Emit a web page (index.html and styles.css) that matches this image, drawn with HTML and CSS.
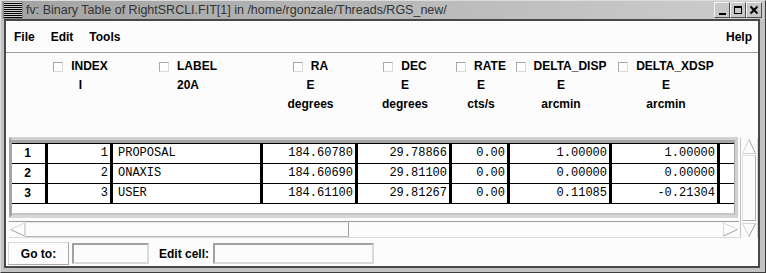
FILE: index.html
```html
<!DOCTYPE html>
<html>
<head>
<meta charset="utf-8">
<link rel="stylesheet" href="styles.css">
</head>
<body>
<div class="window">
  <div class="titlebar">
    <div class="ticon"></div>
    <div class="ttext">fv: Binary Table of RightSRCLI.FIT[1] in /home/rgonzale/Threads/RGS_new/</div>
    <div class="tbtns">
      <div class="tbtn"><svg width="14" height="14" viewBox="0 0 14 14"><rect x="4" y="10" width="7" height="2" fill="#000"/></svg></div>
      <div class="tbtn"><svg width="14" height="14" viewBox="0 0 14 14"><rect x="3.5" y="3.5" width="7" height="7" fill="none" stroke="#000"/><rect x="3" y="3" width="8" height="2" fill="#000"/></svg></div>
      <div class="tbtn"><svg width="14" height="14" viewBox="0 0 14 14"><path d="M3.5 3.5 L10.5 10.5 M10.5 3.5 L3.5 10.5" stroke="#000" stroke-width="2"/></svg></div>
    </div>
  </div>
  <div class="client">
    <div class="menubar">
      <span class="mi">File</span>
      <span class="mi">Edit</span>
      <span class="mi">Tools</span>
      <span class="mi help">Help</span>
    </div>
    <div class="header">
      <div></div>
      <div class="hcol"><div class="hname"><span class="cb"></span>INDEX</div><div>I</div><div></div></div>
      <div class="hcol"><div class="hname"><span class="cb"></span>LABEL</div><div>20A</div><div></div></div>
      <div class="hcol"><div class="hname"><span class="cb"></span>RA</div><div>E</div><div>degrees</div></div>
      <div class="hcol"><div class="hname"><span class="cb"></span>DEC</div><div>E</div><div>degrees</div></div>
      <div class="hcol"><div class="hname"><span class="cb"></span>RATE</div><div>E</div><div>cts/s</div></div>
      <div class="hcol"><div class="hname"><span class="cb"></span>DELTA_DISP</div><div>E</div><div>arcmin</div></div>
      <div class="hcol"><div class="hname"><span class="cb"></span>DELTA_XDSP</div><div>E</div><div>arcmin</div></div>
      <div></div>
    </div>
    <div class="tzone">
      <div class="tframe">
        <div class="tinner">
          <div class="rows">
            <div class="trow">
              <div class="c rn">1</div><div class="c num">1</div><div class="c txt">PROPOSAL</div><div class="c num">184.60780</div><div class="c num">29.78866</div><div class="c num">0.00</div><div class="c num">1.00000</div><div class="c num">1.00000</div><div class="c last"></div>
            </div>
            <div class="trow">
              <div class="c rn">2</div><div class="c num">2</div><div class="c txt">ONAXIS</div><div class="c num">184.60690</div><div class="c num">29.81100</div><div class="c num">0.00</div><div class="c num">0.00000</div><div class="c num">0.00000</div><div class="c last"></div>
            </div>
            <div class="trow">
              <div class="c rn">3</div><div class="c num">3</div><div class="c txt">USER</div><div class="c num">184.61100</div><div class="c num">29.81267</div><div class="c num">0.00</div><div class="c num">0.11085</div><div class="c num">-0.21304</div><div class="c last"></div>
            </div>
          </div>
        </div>
      </div>
      <div class="vscroll">
        <div class="arrow"><svg width="16" height="16" viewBox="0 0 16 16"><path d="M1.5 15.5 L8 1.5" stroke="#d6d6d6" fill="none"/><path d="M8 1.5 L14.5 15.5" stroke="#a8a8a8" fill="none"/><path d="M1.5 15.5 H14.5" stroke="#cfcfcf" fill="none"/></svg></div>
        <div class="vtrough"><div class="vslider"></div></div>
        <div class="arrow"><svg width="16" height="16" viewBox="0 0 16 16"><path d="M1.5 1.5 H14.5" stroke="#d6d6d6" fill="none"/><path d="M1.5 1.5 L8 14.5" stroke="#d6d6d6" fill="none"/><path d="M14.5 1.5 L8 14.5" stroke="#a0a0a0" fill="none"/></svg></div>
      </div>
      <div class="hscroll">
        <div class="arrow"><svg width="16" height="15" viewBox="0 0 16 15"><path d="M15.5 1 L1.5 7.5" stroke="#d6d6d6" fill="none"/><path d="M1.5 7.5 L15.5 14" stroke="#a0a0a0" fill="none"/><path d="M15.5 1 V14" stroke="#d6d6d6" fill="none"/></svg></div>
        <div class="hslider"></div>
        <div class="hspace"></div>
        <div class="arrow"><svg width="16" height="15" viewBox="0 0 16 15"><path d="M0.5 1 L14.5 7.5" stroke="#d6d6d6" fill="none"/><path d="M14.5 7.5 L0.5 14" stroke="#a0a0a0" fill="none"/><path d="M0.5 1 V14" stroke="#d6d6d6" fill="none"/></svg></div>
      </div>
    </div>
    <div class="bottom">
      <div class="btn">Go to:</div>
      <div class="inp inp1"></div>
      <div class="lbl">Edit cell:</div>
      <div class="inp inp2"></div>
    </div>
  </div>
</div>
</body>
</html>
```
FILE: styles.css
```css
* { box-sizing: border-box; }
html, body { margin: 0; padding: 0; }
body {
  font-family: "Liberation Sans", Arial, sans-serif;
  background: #c0c0c0;
  width: 766px;
  height: 273px;
  overflow: hidden;
}
.window {
  width: 766px;
  height: 273px;
  background: #c2c2c2;
  border: 1px solid;
  border-color: #dcdcdc #3c3c3c #3c3c3c #dcdcdc;
  padding: 0 5px 4px 3px;
  display: flex;
  flex-direction: column;
}
.titlebar {
  height: 18px;
  margin: 0 -4px 0 -2px;
  display: flex;
  align-items: center;
  background: linear-gradient(to right, #a3a3a3, #cdcdcd);
}
.ticon {
  width: 20px;
  height: 18px;
  margin-left: 1px;
  border: 1px solid #8a8a8a;
  background: repeating-linear-gradient(to bottom, #d0d0d0 0 1px, #000 1px 2px);
}
.ttext {
  margin-left: 3px;
  flex: 1;
  font-size: 12.5px;
  color: #333;
  white-space: nowrap;
  overflow: hidden;
  line-height: 18px;
}
.tbtns {
  display: flex;
  margin-right: 2px;
}
.tbtn {
  width: 16px;
  height: 16px;
  border: 1px solid;
  border-color: #f2f2f2 #505050 #505050 #f2f2f2;
  background: #c8c8c8;
  display: flex;
}
.client {
  flex: 1;
  background: #fcfcfc;
  border: 2px solid #484848;
  display: flex;
  flex-direction: column;
}
.menubar {
  height: 32px;
  flex: none;
  border-bottom: 1px solid #9c9c9c;
  display: flex;
  align-items: center;
  padding: 0 6px 0 8px;
  font-weight: bold;
  font-size: 12px;
  color: #000;
}
.mi + .mi { margin-left: 16px; }
.mi.help { margin-left: auto; }
.header, .trow {
  display: grid;
  grid-template-columns: 36px 65px 150px 95px 94px 58px 102px 108px 14px;
}
.header {
  height: 84px;
  flex: none;
  padding: 4px 0 0 6px;
  font-weight: bold;
  font-size: 12px;
  color: #000;
}
.hcol {
  display: flex;
  flex-direction: column;
  align-items: center;
  white-space: nowrap;
}
.hcol > div { height: 19px; line-height: 19px; }
.hname {
  display: flex;
  align-items: center;
  gap: 8px;
}
.cb {
  width: 10px;
  height: 10px;
  border: 1px solid;
  border-color: #a8a8a8 #dadada #dadada #a8a8a8;
  background: #fff;
}
.tzone {
  display: grid;
  grid-template-columns: 729px 18px;
  grid-template-rows: 81px 17px;
  column-gap: 2px;
  row-gap: 3px;
  padding-left: 3px;
  flex: none;
}
.tframe {
  grid-row: 1;
  grid-column: 1;
  border: 3px solid;
  border-color: #d2d2d2 #d0d0d0 #d6d6d6 #a4a4a4;
}
.tinner {
  height: 100%;
  border-top: 3px solid #a6a6a6;
  border-right: 1px solid #a8a8a8;
  border-bottom: 2px solid #c6c6c6;
  background: #fff;
}
.rows { border-top: 1px solid #000; }
.trow {
  height: 20px;
  border-bottom: 1px solid #000;
}
.c {
  border-right: 3px solid #000;
  font-family: "Liberation Mono", "Courier New", monospace;
  font-size: 12px;
  line-height: 19px;
  color: #000;
  white-space: nowrap;
  overflow: hidden;
}
.c.last { border-right: none; }
.c.num { text-align: right; padding-right: 2px; }
.c.txt { padding-left: 5px; }
.c.rn {
  font-family: "Liberation Sans", Arial, sans-serif;
  font-weight: bold;
  text-align: center;
  padding-right: 2px;
}
.vscroll {
  grid-row: 1 / 3;
  grid-column: 2;
  margin-top: 1px;
  display: flex;
  flex-direction: column;
  border-left: 1px solid #c4c4c4;
  border-right: 1px solid #d8d8d8;
  background: #fcfcfc;
}
.arrow { flex: none; display: flex; }
.vtrough { flex: 1; padding: 1px 0; }
.vslider {
  height: 100%;
  margin: 0 1px 0 1px;
  border: 1px solid;
  border-color: #e0e0e0 #b0b0b0 #b0b0b0 #e0e0e0;
}
.hscroll {
  grid-row: 2;
  grid-column: 1;
  margin-right: -1px;
  display: flex;
  border-top: 1px solid #9c9c9c;
  border-bottom: 1px solid #dadada;
  background: #fcfcfc;
}
.hslider {
  width: 324px;
  height: 100%;
  border: 1px solid;
  border-color: #e6e6e6 #9c9c9c #b8b8b8 #dcdcdc;
}
.hspace { flex: 1; }
.bottom {
  display: flex;
  align-items: center;
  padding: 4px 0 0 2px;
  font-weight: bold;
  font-size: 12px;
  color: #000;
}
.btn {
  width: 61px;
  height: 23px;
  border: 1px solid;
  border-color: #d8d8d8 #a8a8a8 #a8a8a8 #d8d8d8;
  display: flex;
  align-items: center;
  justify-content: center;
}
.inp {
  height: 21px;
  border: 2px solid;
  border-color: #a2a2a2 #dadada #dadada #a2a2a2;
  background: #fcfcfc;
}
.inp1 { width: 77px; margin-left: 3px; }
.lbl { margin-left: 10px; }
.inp2 { width: 161px; margin-left: 4px; }
```
